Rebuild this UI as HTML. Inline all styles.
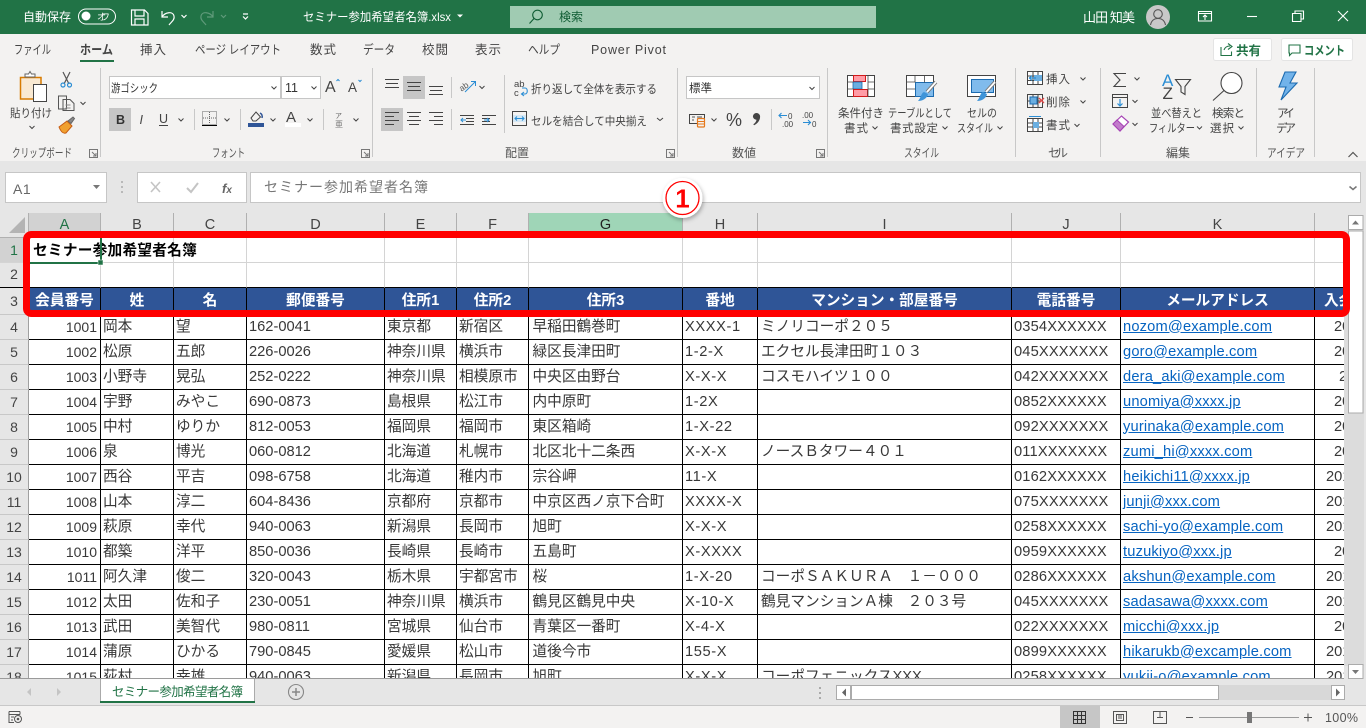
<!DOCTYPE html>
<html lang="ja"><head><meta charset="utf-8"><title>Excel</title>
<style>
html,body{margin:0;padding:0;width:1366px;height:728px;overflow:hidden;background:#e6e6e6}
*{box-sizing:border-box}
body{font-family:"Liberation Sans","Noto Sans CJK JP",sans-serif;position:relative}
svg text{font-family:"Liberation Sans","Noto Sans CJK JP",sans-serif}
#chrome{position:absolute;left:0;top:0;z-index:1}
#grid{position:absolute;left:0;top:213px;width:1344px;height:465px;overflow:hidden;z-index:2;background:#fff}
table{border-collapse:separate;border-spacing:0;table-layout:fixed;width:1400px}
td,th{padding:0 2px;border-right:1px solid #000;border-bottom:1px solid #000;height:25px;line-height:23px;font-size:14.67px;font-weight:400;color:#383838;white-space:nowrap;overflow:hidden;text-align:left}
tr>:first-child{background:#e6e6e6;border-right:1px solid #a0a0a0;border-bottom:1px solid #c8c8c8;text-align:center;font-size:14px;color:#444;padding:0}
.h th{background:#e6e6e6;border-right:1px solid #b0b0b0;border-bottom:1px solid #b0b0b0;text-align:center;font-size:14.5px;color:#444;height:25px;line-height:22px}
.h th:first-child{border-right:1px solid #b0b0b0}
.g td{border-right:1px solid #d4d4d4;border-bottom:1px solid #d4d4d4;height:25px}
.k td{border-bottom:1px solid #000}
.k td:first-child{line-height:21px;padding-bottom:2px}
.t td{background:#2f5597;color:#fff;font-weight:700;text-align:center;height:27px;line-height:26px;padding:0;border-right:1px solid #000;border-bottom:1px solid #000}
.t td:first-child{background:#e6e6e6;color:#444;font-weight:400;border-right:1px solid #a0a0a0;border-bottom:1px solid #c8c8c8}
.t td:last-child{text-align:left;padding-left:9px}
.d td:nth-child(2){text-align:right;padding-right:3px;font-size:14px}
.d td:nth-child(8){padding-left:3.5px}
.d td:nth-child(9){letter-spacing:.6px}
.d td:nth-child(10){padding-left:3px}
.d td:nth-child(11){letter-spacing:.15px}
.d td:nth-child(12){color:#0563c1;text-decoration:underline;letter-spacing:.18px}
.a td:last-child{padding-left:19px}
.b td:last-child{padding-left:11px}
.d td:last-child{border-right:0}
.c td:last-child{padding-left:24px}
#ttl{position:absolute;left:33px;top:242px;font-size:14.67px;line-height:18px;font-weight:700;color:#000;letter-spacing:.25px;z-index:3;white-space:nowrap}
#over{position:absolute;left:0;top:0;z-index:4;pointer-events:none}
</style></head><body>

<svg id="chrome" width="1366" height="728" viewBox="0 0 1366 728" fill="none">
<rect width="1366" height="34" fill="#217346"/>
<rect y="34" width="1366" height="127" fill="#f3f2f1"/>
<rect y="161" width="1366" height="52" fill="#e6e6e6"/>
<rect y="678" width="1366" height="28" fill="#e6e6e6"/>
<rect y="706" width="1366" height="22" fill="#f3f2f1"/>
<rect y="705" width="1366" height="1" fill="#c8c8c8"/>

<!-- title bar -->
<g fill="#fff">
<text x="23" y="21" font-size="12" textLength="48">自動保存</text>
<circle cx="86" cy="16" r="4.5"/>
<text x="97" y="20" font-size="9" textLength="13">オフ</text>
<text x="303" y="21" font-size="12" textLength="148" lengthAdjust="spacingAndGlyphs">セミナー参加希望者名簿.xlsx</text>
<text x="1083" y="22" font-size="13" textLength="52">山田 知美</text>
</g>
<rect x="78.5" y="9" width="37" height="15" rx="7.5" stroke="#fff"/>
<g stroke="#fff" stroke-width="1.2">
<path d="M131.5 10h13l3.500 3.500v11.500h-16.500zM135 10v6h9v-6M135 25v-6h9v6"/>
<path d="M162 11v6h6M162 17c3-5 11-6 12-1 1 4-3 6-5 9"/>
<path d="M181.500 15l2.500 2.500 2.500-2.500M243 14h5M243 16.500l2.500 2.500 2.500-2.500" />
</g>
<path d="M213 11v6h-6M213 17c-3-5-11-6-12-1-1 4 3 6 5 9M221 15l2.500 2.500 2.500-2.500" stroke="#5f9a7a" stroke-width="1.200"/>
<path d="M457 14.500h6l-3 3z" fill="#fff"/>
<rect x="510" y="6" width="366" height="22" fill="#a0cbb2"/>
<circle cx="537.500" cy="15" r="4.800" stroke="#0f5c33" stroke-width="1.100"/>
<path d="M534 18.500l-4.500 5" stroke="#0f5c33" stroke-width="1.100"/>
<text x="559" y="21" font-size="12" fill="#0f5c33">検索</text>
<circle cx="1158" cy="17" r="12" fill="#c8c8c8"/>
<circle cx="1158" cy="14" r="4.300" stroke="#555" stroke-width="1.100"/>
<path d="M1150.500 25c1-5 4-6.500 7.500-6.500s6.500 1.500 7.500 6.500" stroke="#555" stroke-width="1.100"/>
<g stroke="#fff" stroke-width="1.100">
<path d="M1198.500 11.500h13v9.500h-13zM1198.500 13.500h13M1205 20v-4.500M1203 17l2-2 2 2"/>
<path d="M1247 16.500h10"/>
<path d="M1292.500 13.500h8.500v8h-8.500zM1295 13.500v-2.500h8.500v8h-2.500"/>
<path d="M1338 11l10 10M1348 11l-10 10"/>
</g>

<!-- tabs -->
<g font-size="12.500" fill="#444">
<text x="14" y="54" textLength="37" lengthAdjust="spacingAndGlyphs">ファイル</text>
<text x="80" y="54" textLength="33" font-weight="700" lengthAdjust="spacingAndGlyphs">ホーム</text>
<text x="140" y="54" textLength="26">挿入</text>
<text x="195" y="54" textLength="86" lengthAdjust="spacingAndGlyphs">ページ レイアウト</text>
<text x="310" y="54" textLength="26">数式</text>
<text x="363" y="54" textLength="32" lengthAdjust="spacingAndGlyphs">データ</text>
<text x="422" y="54" textLength="26">校閲</text>
<text x="475" y="54" textLength="26">表示</text>
<text x="528" y="54" textLength="32" lengthAdjust="spacingAndGlyphs">ヘルプ</text>
<text x="591" y="54" textLength="75">Power Pivot</text>
</g>
<rect x="80" y="60" width="34" height="2" fill="#217346"/>
<rect x="1213.500" y="38.500" width="58" height="22" rx="2" fill="#fff" stroke="#e4e4e4"/>
<rect x="1281.500" y="38.500" width="71" height="22" rx="2" fill="#fff" stroke="#e4e4e4"/>
<text x="1236" y="55" font-size="12.500" font-weight="700" fill="#217346" textLength="25">共有</text>
<text x="1304" y="55" font-size="12.500" font-weight="700" fill="#217346" textLength="41" lengthAdjust="spacingAndGlyphs">コメント</text>
<path d="M1221 47v8.500h10.500v-4M1224 50c1-3 3-4 6-4M1228 43.500l4 3-4 3" stroke="#217346" stroke-width="1.100"/>
<path d="M1289 45h11v8h-8l-2.500 2.500v-2.500h-.5z" stroke="#217346" stroke-width="1.100"/>

<!-- separators -->
<g fill="#c8c8c8">
<rect x="100" y="68" width="1" height="89"/><rect x="372" y="68" width="1" height="89"/><rect x="677" y="68" width="1" height="89"/><rect x="827" y="68" width="1" height="89"/><rect x="1015" y="68" width="1" height="89"/><rect x="1100" y="68" width="1" height="89"/><rect x="1256" y="68" width="1" height="89"/><rect x="1314" y="68" width="1" height="89"/>
<rect x="194" y="109" width="1" height="21"/><rect x="240" y="109" width="1" height="21"/><rect x="323" y="109" width="1" height="21"/>
<rect x="451" y="77" width="1" height="21"/><rect x="451" y="109" width="1" height="21"/><rect x="504" y="75" width="1" height="58"/><rect x="771" y="109" width="1" height="21"/>
</g>

<!-- group labels -->
<g font-size="12" fill="#555">
<text x="12" y="157" textLength="60" lengthAdjust="spacingAndGlyphs">クリップボード</text>
<text x="212" y="157" textLength="33" lengthAdjust="spacingAndGlyphs">フォント</text>
<text x="505" y="157" textLength="24">配置</text>
<text x="732" y="157" textLength="24">数値</text>
<text x="904" y="157" textLength="35" lengthAdjust="spacingAndGlyphs">スタイル</text>
<text x="1048" y="157" textLength="20">セル</text>
<text x="1166" y="157" textLength="24">編集</text>
<text x="1267" y="157" textLength="38" lengthAdjust="spacingAndGlyphs">アイデア</text>
</g>
<g stroke="#777" stroke-width="1">
<path d="M89.500 149.500h8v8h-8zM92 152l4 4M96 153v3h-3"/>
<path d="M361.500 149.500h8v8h-8zM364 152l4 4M368 153v3h-3"/>
<path d="M666.500 149.500h8v8h-8zM669 152l4 4M673 153v3h-3"/>
<path d="M816.500 149.500h8v8h-8zM819 152l4 4M823 153v3h-3"/>
</g>
<path d="M1348.500 157l4.500-4.500 4.500 4.500" stroke="#555" stroke-width="1.200"/>

<!-- clipboard -->
<path d="M20.500 77.500h20.500v21.500h-20.500z" stroke="#d87b00" stroke-width="1.500" fill="#f9e9d2"/>
<path d="M25 77v-3h3.500l1.500-2.500 1.500 2.500h3.500v3z" fill="#fff" stroke="#666"/>
<rect x="33.500" y="84.500" width="13" height="17" fill="#fff" stroke="#444"/>
<text x="10" y="117" font-size="11.500" fill="#444" textLength="42" lengthAdjust="spacingAndGlyphs">貼り付け</text>
<path d="M29.500 126l2.500 2.500 2.500-2.500M80.500 102l2.500 2.500 2.500-2.500" stroke="#444"/>
<path d="M63 72l6 12M70 72l-6 12" stroke="#555" stroke-width="1.200"/>
<circle cx="63" cy="85" r="2" stroke="#2a8dd4" stroke-width="1.200"/><circle cx="69.500" cy="85" r="2" stroke="#2a8dd4" stroke-width="1.200"/>
<path d="M58.500 96h8v13h-8zM63 99.500h7l4 4v7h-11z" stroke="#555" fill="#f3f2f1"/>
<path d="M65.500 105h5M65.500 108h5" stroke="#888"/>
<path d="M59 127l8-6 5 5-6 7c-3 1-5-1-7-6z" fill="#f0a030" stroke="#c55a11"/>
<path d="M68 121l5-4 1.500 1.500-3.500 5z" fill="#888" stroke="#666"/>

<!-- font -->
<rect x="109.500" y="76.500" width="171" height="22" fill="#fff" stroke="#c6c6c6"/>
<rect x="281.500" y="76.500" width="39" height="22" fill="#fff" stroke="#c6c6c6"/>
<text x="111" y="92" font-size="11.500" fill="#333" textLength="47" lengthAdjust="spacingAndGlyphs">游ゴシック</text>
<text x="285" y="92" font-size="12.500" fill="#333" textLength="13">11</text>
<g stroke="#444" stroke-width="1">
<path d="M271.500 86.500l2.500 2.500 2.500-2.500M311.500 86.500l2.500 2.500 2.500-2.500"/>
<path d="M178.500 118.500l2.500 2.500 2.500-2.500M224.500 118.500l2.500 2.500 2.500-2.500M270.500 118.500l2.500 2.500 2.500-2.500M307.500 118.500l2.500 2.500 2.500-2.500M353.500 118.500l2.500 2.500 2.500-2.500"/>
</g>
<text x="325" y="92" font-size="16" fill="#444">A</text>
<path d="M336.500 81l1.500-1.500 1.500 1.500" stroke="#2a8dd4"/>
<text x="348" y="92" font-size="13.500" fill="#444">A</text>
<path d="M358.500 80l1.500 1.500 1.500-1.500" stroke="#2a8dd4"/>
<rect x="109" y="108" width="22" height="23" fill="#c6c6c6"/>
<text x="116" y="124" font-size="12.500" font-weight="700" fill="#333">B</text>
<text x="139.500" y="124" font-size="12.500" font-style="italic" font-family="Liberation Serif" fill="#444">I</text>
<text x="159" y="123" font-size="12.500" fill="#444">U</text>
<rect x="159" y="125" width="9" height="1" fill="#444"/>
<rect x="202.500" y="111.500" width="14" height="13" stroke="#666" stroke-dasharray="1 1"/>
<path d="M202 125.500h15" stroke="#000"/>
<path d="M209.500 112v12M203 118h13" stroke="#666" stroke-dasharray="1 1"/>
<path d="M251 118l5-6 4.500 5-4.500 4h-3z" stroke="#444" fill="#f3f2f1"/>
<path d="M260 113c2 1 2.500 3 2 5" stroke="#2f5597" stroke-width="1.500"/>
<rect x="248" y="123" width="16" height="4" fill="#2f5597"/>
<text x="286" y="122" font-size="15" fill="#444">A</text>
<rect x="285" y="123" width="16" height="4" fill="#fff"/>
<text x="335" y="118" font-size="7" fill="#666">ア</text>
<text x="335" y="127" font-size="8" fill="#777">亜</text>

<!-- alignment -->
<rect x="403" y="76" width="22" height="23" fill="#c6c6c6"/>
<rect x="381" y="108" width="22" height="23" fill="#c6c6c6"/>
<g stroke="#444" stroke-width="1">
<path d="M385 79.500h14M386 83.500h12M385 87.500h14"/>
<path d="M407 82.500h14M408 86.500h12M407 90.500h14"/>
<path d="M429 86.500h14M430 90.500h12M429 94.500h14"/>
<path d="M385 112.500h14M385 116.500h9M385 120.500h14M385 124.500h9"/>
<path d="M407 112.500h14M409 116.500h10M407 120.500h14M409 124.500h10"/>
<path d="M429 112.500h14M434 116.500h9M429 120.500h14M434 124.500h9"/>
<path d="M460 115.500h14M466 118.500h8M466 121.500h8M460 124.500h14"/>
<path d="M482 115.500h14M482 118.500h8M482 121.500h8M482 124.500h14"/>
<path d="M479.500 86l2.500 2.500 2.500-2.500M657 118l3 2.500 3-2.500"/>
</g>
<path d="M466 120h-5M463 118l-2 2 2 2M484 120h5M487 118l2 2-2 2" stroke="#2a8dd4"/>
<text x="459" y="90" font-size="8.500" fill="#555" transform="rotate(-35 463 87)">ab</text>
<path d="M465 92l10-10M471 81.500h4.500v4.500" stroke="#2a8dd4"/>
<text x="514" y="87" font-size="9.500" fill="#444">ab</text>
<text x="514" y="96" font-size="9.500" fill="#444">c</text>
<path d="M522 94h3c3 0 3-6 0-6h-3M524 92l-2.500 2 2.500 2" stroke="#2a8dd4" stroke-width="1.100"/>
<text x="531" y="93" font-size="11.500" fill="#444" textLength="126" lengthAdjust="spacingAndGlyphs">折り返して全体を表示する</text>
<rect x="512.500" y="111.500" width="14" height="14" stroke="#444"/>
<rect x="513" y="115" width="13" height="7" fill="#d5e8f5"/>
<path d="M515 118.500h9M517 116.500l-2 2 2 2M522 116.500l2 2-2 2" stroke="#2a8dd4"/>
<text x="531" y="125" font-size="11.500" fill="#444" textLength="116" lengthAdjust="spacingAndGlyphs">セルを結合して中央揃え</text>

<!-- number -->
<rect x="686.500" y="76.500" width="133" height="22" fill="#fff" stroke="#c6c6c6"/>
<text x="689" y="92" font-size="11.500" fill="#333" textLength="23">標準</text>
<path d="M809.500 87l2.500 2.500 2.500-2.500M711.500 118.500l2.500 2.500 2.500-2.500" stroke="#444"/>
<rect x="689.500" y="114.500" width="15" height="9" stroke="#444"/>
<path d="M692 117h3M697 117h5M692 120h2" stroke="#555"/>
<rect x="697.500" y="118.500" width="7" height="8.500" rx="1" fill="#f3f2f1" stroke="#e5791d" stroke-width="1.200"/>
<path d="M698 121.500h6M698 124h6" stroke="#e5791d"/>
<text x="726" y="126" font-size="18" fill="#444" textLength="16" lengthAdjust="spacingAndGlyphs">%</text>
<path d="M756.500 113a3.600 3.600 0 0 1 3.600 3.800c0 4-3 7-6 8.500l-.8-1c1.800-1.300 3-2.800 3.200-4.600a3.400 3.400 0 0 1-3.600-3.300 3.500 3.500 0 0 1 3.600-3.400z" fill="#444"/>
<path d="M779 115.500h8M781.500 113l-2.500 2.500 2.500 2.500M803 122.500h8M808 120l2.500 2.500-2.500 2.500" stroke="#2a8dd4" stroke-width="1.100"/>
<text x="788" y="119" font-size="8" fill="#444">0</text><text x="782" y="127" font-size="8" fill="#444">.00</text>
<text x="802" y="118" font-size="8" fill="#444">.00</text><text x="812" y="127" font-size="8" fill="#444">0</text>

<!-- style icons -->
<g stroke="#444" stroke-width="1">
<rect x="847.500" y="75.500" width="27" height="21" fill="#fff"/>
<rect x="906.500" y="75.500" width="27" height="21" fill="#fff"/>
<rect x="967.500" y="75.500" width="28" height="21" fill="#fff"/>
</g>
<rect x="853.500" y="75.500" width="12" height="6" fill="#ff9ca6" stroke="#d21a1a"/>
<rect x="853" y="82" width="9" height="7" fill="#6aaee0" stroke="#1c6bb0" stroke-width=".8"/>
<rect x="853.500" y="89.500" width="14" height="7" fill="#ff9ca6" stroke="#d21a1a"/>
<path d="M868 75.500v21M847.500 82h6M847.500 89h6M868 82h6M868 89h6" stroke="#444" stroke-width=".8"/>
<rect x="915.500" y="82.500" width="18" height="14" fill="#80bbec" stroke="#1c6bb0"/>
<path d="M906.500 82h9M906.500 89h9M915 75.500v7M924.500 75.500v7" stroke="#444" stroke-width=".8"/>
<rect x="971.500" y="79.500" width="22" height="13" fill="#80bbec" stroke="#1c6bb0"/>
<path d="M936 82l-9 10" stroke="#777" stroke-width="3.600"/><path d="M936 82l-9 10" stroke="#fff" stroke-width="1.800"/>
<path d="M995 82l-9 10" stroke="#777" stroke-width="3.600"/><path d="M995 82l-9 10" stroke="#fff" stroke-width="1.800"/>
<path d="M918 101c4 0 9-2 10-7l-4-2c-3 1-3 6-6 9z" fill="#3f94d8"/>
<path d="M977 101c4 0 9-2 10-7l-4-2c-3 1-3 6-6 9z" fill="#3f94d8"/>
<g font-size="11.500" fill="#444">
<text x="838" y="117" textLength="46" lengthAdjust="spacingAndGlyphs">条件付き</text>
<text x="844" y="132" textLength="24">書式</text>
<text x="888" y="117" textLength="64" lengthAdjust="spacingAndGlyphs">テーブルとして</text>
<text x="890" y="132" textLength="48">書式設定</text>
<text x="967" y="117" textLength="30" lengthAdjust="spacingAndGlyphs">セルの</text>
<text x="957" y="132" textLength="36" lengthAdjust="spacingAndGlyphs">スタイル</text>
</g>
<path d="M872.500 126.500l2.500 2.500 2.500-2.500M942.500 126.500l2.500 2.500 2.500-2.500M997.500 126.500l2.500 2.500 2.500-2.500" stroke="#444"/>

<!-- cells -->
<g stroke="#444" stroke-width="1">
<rect x="1027.500" y="71.500" width="15" height="13" fill="#fff"/>
<rect x="1027.500" y="94.500" width="15" height="13"/>
<rect x="1027.500" y="118.500" width="15" height="13" fill="#fff"/>
<path d="M1027.500 76h15M1027.500 80.500h15M1033 71.500v13M1038 71.500v13M1033 118.500v13M1038 118.500v13M1027.500 123h15M1027.500 127h15"/>
<path d="M1027 101h15M1033 95v12M1038 95v12"/>
</g>
<rect x="1034" y="75" width="8" height="6" fill="#6aaee0"/>
<path d="M1036 78h-7M1032 75.500l-2.500 2.500 2.500 2.500" stroke="#2a8dd4" stroke-width="1.200"/>
<rect x="1030" y="97" width="7" height="7" fill="#6aaee0" stroke="#1c6bb0"/>
<path d="M1039 98l5 5M1044 98l-5 5" stroke="#e04848" stroke-width="1.300"/>
<rect x="1033" y="122" width="6" height="6" fill="#6aaee0"/>
<path d="M1029 116.500h12" stroke="#2a8dd4"/>
<g font-size="11.500" fill="#444">
<text x="1046" y="83" textLength="24">挿入</text>
<text x="1046" y="106" textLength="24">削除</text>
<text x="1046" y="129" textLength="24">書式</text>
</g>
<path d="M1080.500 77.500l2.500 2.500 2.500-2.500M1080.500 100.500l2.500 2.500 2.500-2.500M1074.500 124l2.500 2.500 2.500-2.500M1134.500 77.500l2.500 2.500 2.500-2.500M1132.500 100l2.500 2.500 2.500-2.500M1132.500 123l2.500 2.500 2.500-2.500" stroke="#444"/>

<!-- editing -->
<path d="M1126 73.500h-12l6 6.500-6 6.500h12" stroke="#444" stroke-width="1.100"/>
<rect x="1112.500" y="94.500" width="15" height="13" stroke="#444"/>
<path d="M1112 97.500h16" stroke="#444"/>
<path d="M1120 99v7M1117.500 103.500l2.500 2.500 2.500-2.500" stroke="#2a8dd4" stroke-width="1.200"/>
<path d="M1113 124l8.500-8 7 6-8.500 9z" fill="#fff" stroke="#a643b5" stroke-width="1.200"/>
<path d="M1113 124l4-4 7 6.500-4 4.500z" fill="#c27ccb" stroke="#a643b5"/>
<text x="1162" y="86" font-size="17" fill="#2a8dd4">A</text>
<text x="1162.500" y="99" font-size="17" fill="#444">Z</text>
<path d="M1175.500 79.500h15l-5.500 7v8l-4-2.500v-5.500z" stroke="#444" stroke-width="1.100"/>
<circle cx="1231.500" cy="83" r="10.500" stroke="#444" stroke-width="1.100" fill="#fff"/>
<path d="M1224 90.500l-11 10" stroke="#444" stroke-width="1.100"/>
<g font-size="11.500" fill="#444">
<text x="1151" y="117" textLength="51" lengthAdjust="spacingAndGlyphs">並べ替えと</text>
<text x="1149" y="132" textLength="46" lengthAdjust="spacingAndGlyphs">フィルター</text>
<text x="1212" y="117" textLength="33">検索と</text>
<text x="1210" y="132" textLength="24">選択</text>
<text x="1277" y="117" textLength="18">アイ</text>
<text x="1276" y="132" textLength="20">デア</text>
</g>
<path d="M1197 126.500l2.500 2.500 2.500-2.500M1238.500 126.500l2.500 2.500 2.500-2.500" stroke="#444"/>
<path d="M1285 72h11l-6 11h7l-16 17 5-13h-7z" fill="#72b3ea" stroke="#1c6bb0" stroke-width="1.100"/>

<!-- formula bar -->
<rect x="5.500" y="172.500" width="101" height="30" fill="#fff" stroke="#c6c6c6"/>
<text x="13" y="194" font-size="14" fill="#666" letter-spacing=".5">A1</text>
<path d="M93 185h7l-3.500 4z" fill="#777"/>
<path d="M122 181v2M122 186v2M122 191v2" stroke="#aaa" stroke-width="1.500"/>
<rect x="137.500" y="172.500" width="109" height="30" fill="#fff" stroke="#c6c6c6"/>
<rect x="250.500" y="172.500" width="1110" height="30" fill="#fff" stroke="#c6c6c6"/>
<path d="M151 182l9 10M160 182l-9 10" stroke="#c4c4c4" stroke-width="1.600"/>
<path d="M187 188l4 4 7-9" stroke="#c4c4c4" stroke-width="2"/>
<text x="222" y="193" font-size="13" font-style="italic" font-weight="700" font-family="Liberation Serif" fill="#666">f<tspan font-size="10">x</tspan></text>
<text x="264" y="192" font-size="14" fill="#777" textLength="164">セミナー参加希望者名簿</text>
<path d="M1349.500 186.500l3.500 3 3.500-3" stroke="#777" stroke-width="1.500"/>

<!-- v scrollbar -->
<rect x="1344" y="213" width="22" height="465" fill="#e6e6e6"/>
<rect x="1344" y="230" width="4" height="436" fill="#dcdcdc"/>
<rect x="1348" y="230" width="16" height="436" fill="#dcdcdc"/>
<rect x="1348.500" y="215.500" width="14.500" height="14" fill="#fff" stroke="#ababab"/>
<path d="M1352 224.500h7l-3.500-4z" fill="#777"/>
<rect x="1348.500" y="231" width="14.500" height="182" fill="#fff" stroke="#ababab"/>
<rect x="1348.500" y="664.500" width="14.500" height="14" fill="#fff" stroke="#ababab"/>
<path d="M1352 670h7l-3.500 4z" fill="#777"/>

<!-- sheet tabs -->
<path d="M31 688v8l-4-4zM57 688v8l4-4z" fill="#c4c4c4"/>
<path d="M100.500 678v23.500M254.500 678v23.500" stroke="#aaa"/>
<rect x="101" y="678" width="153" height="24" fill="#fff"/>
<rect x="100" y="701" width="155" height="2" fill="#217346"/>
<text x="112" y="696" font-size="12.500" fill="#217346" textLength="131">セミナー参加希望者名簿</text>
<circle cx="296" cy="692" r="7.500" stroke="#888" stroke-width="1.100"/>
<path d="M292 692h8M296 688v8" stroke="#888" stroke-width="1.500"/>
<path d="M820 687v2M820 692v2M820 697v2" stroke="#aaa" stroke-width="2"/>
<rect x="836" y="685" width="509" height="15" fill="#d8d8d8"/>
<rect x="836.500" y="685.500" width="14" height="14" fill="#fff" stroke="#ababab"/>
<path d="M846 688.500v8l-4-4z" fill="#666"/>
<rect x="851.500" y="685.500" width="367" height="14" fill="#fff" stroke="#ababab"/>
<rect x="1331.500" y="685.500" width="13" height="14" fill="#fff" stroke="#ababab"/>
<path d="M1336 688.500v8l4-4z" fill="#666"/>
<rect x="0" y="678" width="1344" height="1" fill="#9a9a9a"/>

<!-- status bar -->
<path d="M9 711.500h11M9 711.500v11h5M9 714.500h11M11 717h3M11 720h2M20 711.500v3" stroke="#555"/>
<circle cx="18" cy="719" r="3.500" stroke="#555"/><circle cx="18" cy="719" r="1.300" fill="#555"/>
<rect x="1060" y="706" width="40" height="22" fill="#c6c6c6"/>
<path d="M1073.500 711.500h12v12h-12zM1077.500 711.500v12M1081.500 711.500v12M1073.500 715.500h12M1073.500 719.500h12" stroke="#333"/>
<path d="M1113.500 711.500h13v12h-13zM1116.500 714.500h7v6h-7zM1118 716h4M1118 718h4" stroke="#555"/>
<path d="M1153.500 711.500h13v12h-13zM1160 711.500v6h-3M1160 711.500v6h3" stroke="#555"/>
<path d="M1186 717.500h7M1304 717.500h8M1308 713.500v8" stroke="#555"/>
<rect x="1199" y="717" width="100" height="1" fill="#9a9a9a"/>
<rect x="1247" y="712" width="5" height="11" fill="#777"/>
<text x="1325" y="722" font-size="12.500" fill="#555" textLength="33">100%</text>
</svg>

<div id="grid">
<table>
<colgroup><col style="width:29px"><col style="width:72px"><col style="width:73px"><col style="width:73px"><col style="width:138px"><col style="width:72px"><col style="width:72px"><col style="width:154px"><col style="width:75px"><col style="width:254px"><col style="width:109px"><col style="width:194px"><col style="width:85px"></colgroup>
<tr class="h"><th></th><th style="background:#d2d2d2;color:#217346">A</th><th>B</th><th>C</th><th>D</th><th>E</th><th>F</th><th style="background:#9fd5b7;color:#222">G</th><th>H</th><th>I</th><th>J</th><th>K</th><th></th></tr>
<tr class="g"><td style="background:#d2d2d2;color:#217346">1</td><td></td><td></td><td></td><td></td><td></td><td></td><td></td><td></td><td></td><td></td><td></td><td></td></tr>
<tr class="g k"><td>2</td><td></td><td></td><td></td><td></td><td></td><td></td><td></td><td></td><td></td><td></td><td></td><td></td></tr>
<tr class="t"><td>3</td><td>会員番号</td><td>姓</td><td>名</td><td>郵便番号</td><td>住所1</td><td>住所2</td><td>住所3</td><td>番地</td><td>マンション・部屋番号</td><td>電話番号</td><td>メールアドレス</td><td>入会日</td></tr>
<tr class="d a"><td>4</td><td>1001</td><td>岡本</td><td>望</td><td>162-0041</td><td>東京都</td><td>新宿区</td><td>早稲田鶴巻町</td><td>XXXX-1</td><td>ミノリコーポ２０５</td><td>0354XXXXXX</td><td>nozom@example.com</td><td>2015/4/1</td></tr>
<tr class="d a"><td>5</td><td>1002</td><td>松原</td><td>五郎</td><td>226-0026</td><td>神奈川県</td><td>横浜市</td><td>緑区長津田町</td><td>1-2-X</td><td>エクセル長津田町１０３</td><td>045XXXXXXX</td><td>goro@example.com</td><td>2015/4/1</td></tr>
<tr class="d c"><td>6</td><td>1003</td><td>小野寺</td><td>晃弘</td><td>252-0222</td><td>神奈川県</td><td>相模原市</td><td>中央区由野台</td><td>X-X-X</td><td>コスモハイツ１００</td><td>042XXXXXXX</td><td>dera_aki@example.com</td><td>2015/4/1</td></tr>
<tr class="d a"><td>7</td><td>1004</td><td>宇野</td><td>みやこ</td><td>690-0873</td><td>島根県</td><td>松江市</td><td>内中原町</td><td>1-2X</td><td></td><td>0852XXXXXX</td><td>unomiya@xxxx.jp</td><td>2015/4/1</td></tr>
<tr class="d a"><td>8</td><td>1005</td><td>中村</td><td>ゆりか</td><td>812-0053</td><td>福岡県</td><td>福岡市</td><td>東区箱崎</td><td>1-X-22</td><td></td><td>092XXXXXXX</td><td>yurinaka@example.com</td><td>2015/4/1</td></tr>
<tr class="d a"><td>9</td><td>1006</td><td>泉</td><td>博光</td><td>060-0812</td><td>北海道</td><td>札幌市</td><td>北区北十二条西</td><td>X-X-X</td><td>ノースＢタワー４０１</td><td>011XXXXXXX</td><td>zumi_hi@xxxx.com</td><td>2015/4/1</td></tr>
<tr class="d b"><td>10</td><td>1007</td><td>西谷</td><td>平吉</td><td>098-6758</td><td>北海道</td><td>稚内市</td><td>宗谷岬</td><td>11-X</td><td></td><td>0162XXXXXX</td><td>heikichi11@xxxx.jp</td><td>2015/10/1</td></tr>
<tr class="d b"><td>11</td><td>1008</td><td>山本</td><td>淳二</td><td>604-8436</td><td>京都府</td><td>京都市</td><td>中京区西ノ京下合町</td><td>XXXX-X</td><td></td><td>075XXXXXXX</td><td>junji@xxx.com</td><td>2015/10/1</td></tr>
<tr class="d b"><td>12</td><td>1009</td><td>萩原</td><td>幸代</td><td>940-0063</td><td>新潟県</td><td>長岡市</td><td>旭町</td><td>X-X-X</td><td></td><td>0258XXXXXX</td><td>sachi-yo@example.com</td><td>2015/10/1</td></tr>
<tr class="d a"><td>13</td><td>1010</td><td>都築</td><td>洋平</td><td>850-0036</td><td>長崎県</td><td>長崎市</td><td>五島町</td><td>X-XXXX</td><td></td><td>0959XXXXXX</td><td>tuzukiyo@xxx.jp</td><td>2016/4/1</td></tr>
<tr class="d b"><td>14</td><td>1011</td><td>阿久津</td><td>俊二</td><td>320-0043</td><td>栃木県</td><td>宇都宮市</td><td>桜</td><td>1-X-20</td><td>コーポＳＡＫＵＲＡ　１－０００</td><td>0286XXXXXX</td><td>akshun@example.com</td><td>2016/10/1</td></tr>
<tr class="d b"><td>15</td><td>1012</td><td>太田</td><td>佐和子</td><td>230-0051</td><td>神奈川県</td><td>横浜市</td><td>鶴見区鶴見中央</td><td>X-10-X</td><td>鶴見マンションＡ棟　２０３号</td><td>045XXXXXXX</td><td>sadasawa@xxxx.com</td><td>2016/10/1</td></tr>
<tr class="d a"><td>16</td><td>1013</td><td>武田</td><td>美智代</td><td>980-0811</td><td>宮城県</td><td>仙台市</td><td>青葉区一番町</td><td>X-4-X</td><td></td><td>022XXXXXXX</td><td>micchi@xxx.jp</td><td>2017/4/1</td></tr>
<tr class="d b"><td>17</td><td>1014</td><td>蒲原</td><td>ひかる</td><td>790-0845</td><td>愛媛県</td><td>松山市</td><td>道後今市</td><td>155-X</td><td></td><td>0899XXXXXX</td><td>hikarukb@excample.com</td><td>2017/10/1</td></tr>
<tr class="d b"><td>18</td><td>1015</td><td>荻村</td><td>幸雄</td><td>940-0063</td><td>新潟県</td><td>長岡市</td><td>旭町</td><td>X-X-X</td><td>コーポフェニックスXXX</td><td>0258XXXXXX</td><td>yukii-o@example.com</td><td>2017/10/1</td></tr>
</table>
</div>

<div id="ttl">セミナー参加希望者名簿</div>

<svg id="over" width="1366" height="728" viewBox="0 0 1366 728" fill="none">
<defs><filter id="s" x="-30%" y="-30%" width="160%" height="160%"><feDropShadow dx="1" dy="2" stdDeviation="2" flood-color="#000" flood-opacity=".3"/></filter></defs>
<!-- corner triangle -->
<path d="M25 217v16h-16z" fill="#b4b4b4"/>
<!-- selection -->
<rect x="29" y="262" width="72" height="2" fill="#217346"/>
<rect x="100" y="238" width="2" height="25" fill="#217346"/>
<rect x="98" y="260" width="5" height="5" fill="#217346" stroke="#fff" stroke-width=".5"/>
<!-- red frame -->
<rect x="26.500" y="234.500" width="1320" height="79" rx="5" stroke="#ff0000" stroke-width="7"/>
<!-- badge -->
<circle cx="682.500" cy="198" r="20" fill="#fff" filter="url(#s)"/>
<circle cx="682.500" cy="198" r="16.500" stroke="#ff0000" stroke-width="1.300" fill="#fff"/>
<text x="682.500" y="207.500" text-anchor="middle" font-size="26" font-weight="700" fill="#ff0000" style="font-family:'Liberation Sans',sans-serif">1</text>
</svg>
</body></html>
